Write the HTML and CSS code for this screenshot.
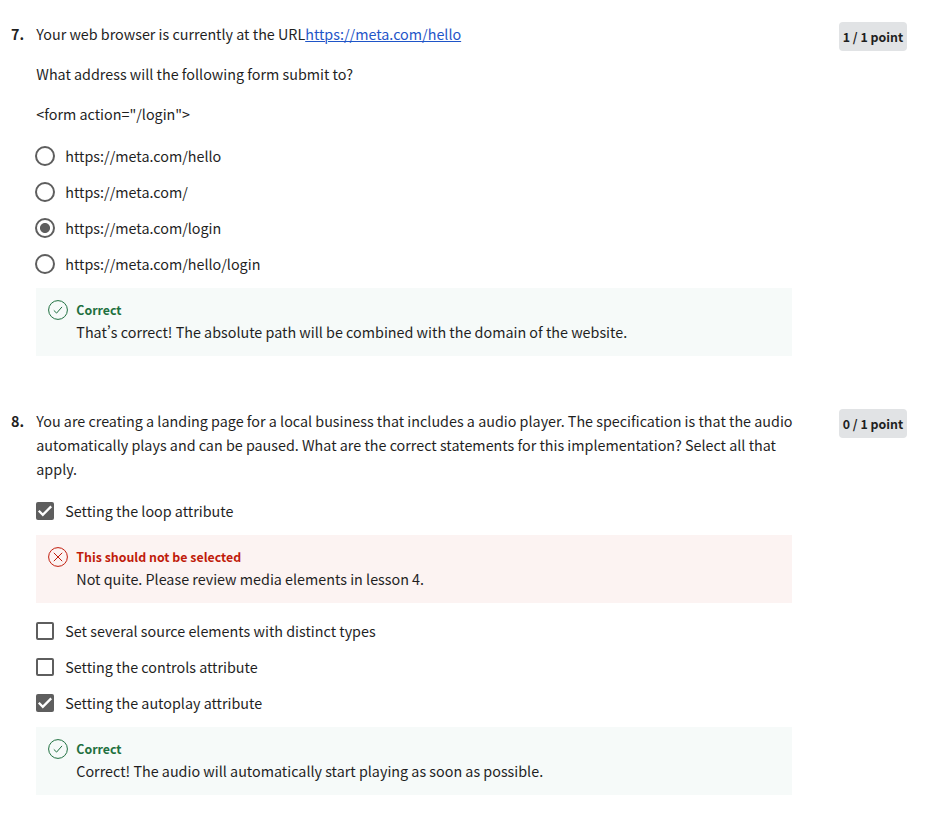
FILE: index.html
```html
<!DOCTYPE html>
<html lang="en">
<head>
<meta charset="utf-8">
<title>Quiz feedback</title>
<link rel="stylesheet" href="styles.css">
</head>
<body>
<main class="quiz">
  <section class="question">
    <div class="number">7.</div>
    <div class="content">
      <div class="prompt">
        <p>Your web browser is currently at the URL<a href="#">https://meta.com/hello</a></p>
        <p>What address will the following form submit to?</p>
        <p>&lt;form action="/login"&gt;</p>
      </div>
      <div class="option"><span class="radio"></span><span>https://meta.com/hello</span></div>
      <div class="option"><span class="radio"></span><span>https://meta.com/</span></div>
      <div class="option"><span class="radio selected"></span><span>https://meta.com/login</span></div>
      <div class="option"><span class="radio"></span><span>https://meta.com/hello/login</span></div>
      <div class="feedback correct">
        <svg class="status" viewBox="0 0 20 20"><circle cx="10" cy="10" r="9.4"/><path d="M5.8 10.4l2.8 2.7 5.4-6.2"/></svg>
        <div class="message"><strong>Correct</strong><p>That’s correct! The absolute path will be combined with the domain of the website.</p></div>
      </div>
    </div>
    <div class="points">1 / 1 point</div>
  </section>
  <section class="question">
    <div class="number">8.</div>
    <div class="content">
      <div class="prompt">
        <p>You are creating a landing page for a local business that includes a audio player. The specification is that the audio<br>automatically plays and can be paused. What are the correct statements for this implementation? Select all that<br>apply.</p>
      </div>
      <div class="option"><span class="checkbox checked"><svg viewBox="0 0 18 18"><path d="M2.8 8.8l4 4 8.4-8.4"/></svg></span><span>Setting the loop attribute</span></div>
      <div class="feedback incorrect">
        <svg class="status" viewBox="0 0 20 20"><circle cx="10" cy="10" r="9.4"/><path d="M5.8 5.8l8.4 8.4M14.2 5.8l-8.4 8.4"/></svg>
        <div class="message"><strong>This should not be selected</strong><p>Not quite. Please review media elements in lesson 4.</p></div>
      </div>
      <div class="option"><span class="checkbox"></span><span>Set several source elements with distinct types</span></div>
      <div class="option"><span class="checkbox"></span><span>Setting the controls attribute</span></div>
      <div class="option"><span class="checkbox checked"><svg viewBox="0 0 18 18"><path d="M2.8 8.8l4 4 8.4-8.4"/></svg></span><span>Setting the autoplay attribute</span></div>
      <div class="feedback correct">
        <svg class="status" viewBox="0 0 20 20"><circle cx="10" cy="10" r="9.4"/><path d="M5.8 10.4l2.8 2.7 5.4-6.2"/></svg>
        <div class="message"><strong>Correct</strong><p>Correct! The audio will automatically start playing as soon as possible.</p></div>
      </div>
    </div>
    <div class="points">0 / 1 point</div>
  </section>
</main>
</body>
</html>
```
FILE: styles.css
```css
* { box-sizing: border-box; }
body {
  margin: 0;
  background: #fff;
  color: #1f1f1f;
  font: 14.33px/24px "Noto Sans CJK SC", "Noto Sans", sans-serif;
  font-variant-east-asian: proportional-width;
}
p { margin: 0; white-space: nowrap; }
.quiz { padding: 22px 0 0 11px; }
.question {
  display: grid;
  grid-template-columns: 25.3px 755.7px 68px;
  align-items: start;
  margin-bottom: 53px;
}
.number { font-weight: 700; }
.prompt { display: grid; gap: 16px; margin-bottom: 12px; }
a { color: #1f55c8; text-decoration: underline; text-underline-offset: 1px; text-decoration-thickness: 1px; }
.points {
  width: 68px;
  height: 29px;
  margin-left: 47px;
  border-radius: 4px;
  background: #e1e3e5;
  font-size: 12.38px;
  font-weight: 700;
  line-height: 31px;
  text-align: center;
  white-space: nowrap;
}
.option {
  display: flex;
  align-items: center;
  gap: 11px;
  height: 36px;
}
.radio {
  flex: none;
  width: 20px;
  height: 20px;
  margin: 0 -1px;
  border: 2px solid #5e5e5e;
  border-radius: 50%;
}
.selected { background: radial-gradient(circle, #5e5e5e 4.6px, transparent 5.4px); }
.checkbox {
  flex: none;
  width: 18px;
  height: 18px;
  border: 2px solid #5e5e5e;
  border-radius: 2px;
}
.checked { border: 0; background: #5e5e5e; }
.checkbox svg { display: block; width: 18px; height: 18px; fill: none; stroke: #fff; stroke-width: 2.3; }
.feedback {
  display: flex;
  gap: 8px;
  height: 68px;
  margin-top: 6px;
  padding: 12px;
}
.feedback + .option { margin-top: 10px; }
.message strong {
  display: block;
  font-size: 12.38px;
  line-height: 21px;
}
.message p { margin-top: -1px; color: #1f1f1f; }
.status { flex: none; width: 20px; height: 20px; fill: none; stroke: currentColor; }
.correct { background: #f6faf9; color: #1f7040; }
.incorrect { background: #fcf3f2; color: #c01b0b; }
```
